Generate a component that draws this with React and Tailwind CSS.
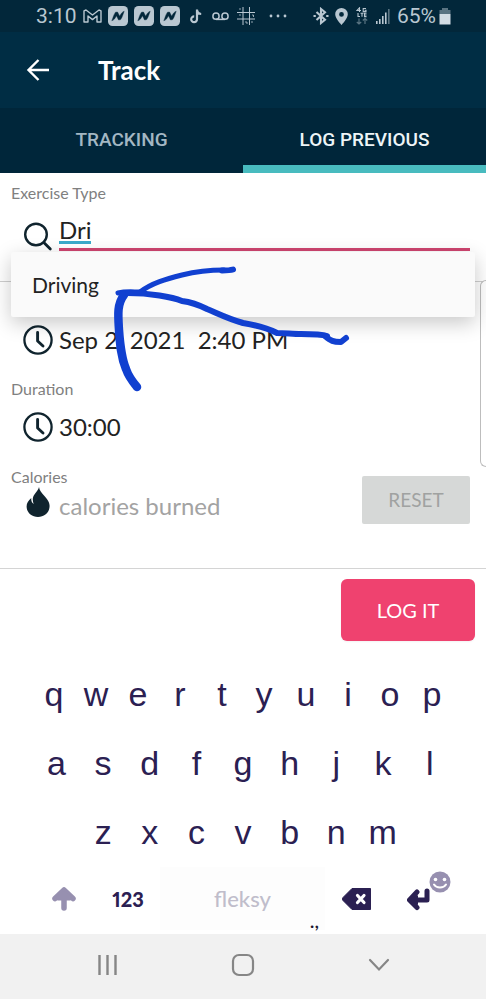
import React from 'react';

const topRow = ['q', 'w', 'e', 'r', 't', 'y', 'u', 'i', 'o', 'p'];
const homeRow = ['a', 's', 'd', 'f', 'g', 'h', 'j', 'k', 'l'];
const bottomRow = ['z', 'x', 'c', 'v', 'b', 'n', 'm'];

const NewsIcon = () => (
  <svg width="20" height="20" viewBox="0 0 20 20">
    <rect width="20" height="20" rx="4.500" fill="#b9c7d1" />
    <path d="M3.800 14.800C5 12 5.500 9 7.500 6.200L9.500 6l2.200 4.200C12.800 8 13.500 6.500 16.200 5.200 15 8 14.500 11 12.600 13.600l-2 .4-2.200-4.200C7.300 12 6.500 13.800 3.800 14.800Z" fill="#02273a" stroke="#02273a" strokeWidth=".4" strokeLinejoin="round" />
  </svg>
);

const ClockIcon = () => (
  <svg width="30" height="30" viewBox="0 0 30 30" fill="none" stroke="#10242e" strokeLinecap="round" strokeLinejoin="round">
    <circle cx="15" cy="15" r="13.6" strokeWidth="2.3" />
    <path d="M14.6 7.5V16l5.4 5" strokeWidth="2.9" />
  </svg>
);

const SearchIcon = () => (
  <svg width="30" height="30" viewBox="0 0 30 30" fill="none" stroke="#10242e" strokeLinecap="round">
    <circle cx="13" cy="13.500" r="10.8" strokeWidth="2.4" />
    <path d="M20.8 21.500 27.3 28" strokeWidth="2.8" />
  </svg>
);

const FlameIcon = () => (
  <svg width="30" height="30" viewBox="0 0 30 30">
    <path
      d="M16 0c-.9 3.800-4.800 6.500-6 10.500-.5 1.800-.2 4.200.7 6.500C8.700 16 8 13.500 8.300 11 5.300 13.500 3.600 16 3.600 19.500 3.600 25.500 8.700 30 15 30s11.600-4.500 11.600-11c0-4.500-2.600-7.200-5.600-10.600C18.600 5.600 16.500 3.500 16 0Z"
      fill="#10242e"
    />
  </svg>
);

const StatusBar = () => (
  <div className="flex h-8 items-center bg-[#02273a] pl-9 pr-[35px] text-[#b9c7d1]">
    <span className="w-[38px] font-['Roboto'] text-[21px] leading-8">3:10</span>
    <svg className="ml-[9px]" width="19" height="14" viewBox="0 0 19 14" fill="none" stroke="currentColor" strokeWidth="1.400" strokeLinejoin="round">
      <path d="M1 13V1.800L3 1l6.500 5L16 1l2 .8V13h-4V7l-4.500 3.600L5 7v6Z" />
    </svg>
    <div className="ml-[6px] flex gap-[6px]">
      <NewsIcon />
      <NewsIcon />
      <NewsIcon />
    </div>
    <svg className="ml-[10px]" width="12" height="15" viewBox="0 0 12 15" fill="none" stroke="currentColor" strokeWidth="2.200">
      <path d="M7 .5v9.800A2.900 2.900 0 1 1 4.200 7.400M7 1c.3 2.500 1.800 3.900 4.200 4" />
    </svg>
    <svg className="ml-[10px]" width="17" height="9" viewBox="0 0 17 9" fill="none" stroke="currentColor" strokeWidth="1.500">
      <circle cx="4" cy="4.200" r="3.100" />
      <circle cx="13" cy="4.200" r="3.100" />
      <path d="M4 7.400h9" />
    </svg>
    <svg className="ml-[8px]" width="18" height="18" viewBox="0 0 18 18" fill="none" stroke="currentColor" strokeWidth="1">
      <path d="M6 0v18M12.500 0v18M0 5.500h18M0 12h18" />
      <path d="M2 2h2M8 15h2v2M15 8h1.500v2M2 8h2M14 15h2" strokeWidth=".8" />
    </svg>
    <svg className="ml-[14px]" width="18" height="4" viewBox="0 0 18 4" fill="currentColor">
      <circle cx="2" cy="2" r="1.400" />
      <circle cx="9" cy="2" r="1.400" />
      <circle cx="16" cy="2" r="1.400" />
    </svg>

    <svg className="ml-auto" width="16" height="18" viewBox="0 0 16 18" fill="none" stroke="currentColor" strokeWidth="2.100">
      <path d="M3.500 5 12 12.700 8 16V2l4 3.300L3.500 13" />
      <path d="M.5 9h2.300M13.200 9h2.300" />
    </svg>
    <svg className="ml-[6px]" width="13" height="17" viewBox="0 0 13 17" fill="currentColor" fillRule="evenodd">
      <path d="M6.500 0A6.300 6.300 0 0 0 .2 6.300C.2 10.500 6.500 17 6.500 17s6.300-6.500 6.300-10.700A6.300 6.300 0 0 0 6.500 0Zm0 4a2.400 2.400 0 1 1 0 4.800 2.400 2.400 0 0 1 0-4.800Z" />
    </svg>
    <svg className="ml-[8px]" width="12" height="18" viewBox="0 0 12 18" fill="none" stroke="currentColor">
      <path d="M3.500 5V.8L1 3.500h4M10 1.500H7.200V4.600H10V3.200H8.600M2 6v3.500h2M4.500 6.200h3M6 6.200v3.500M10.500 6.200H8.500v3.400h2M8.500 8h2" strokeWidth="1.100" />
      <path d="M3 11.500V17M.8 15 3 17l2.200-2M9 17v-5.500M6.800 13.500 9 11.500l2.200 2" stroke="#5a7482" strokeWidth="1.200" />
    </svg>
    <svg className="ml-[8px]" width="14" height="16" viewBox="0 0 14 16" fill="currentColor">
      <path d="M0 13h1.600v3H0ZM3 11h1.600v5H3ZM6 8h1.600v8H6ZM9 4.500h1.600V16H9Z" />
      <path d="M12 1h1.600v15H12Z" fill="#5a7482" />
    </svg>
    <span className="ml-[7px] w-[38px] font-['Roboto'] text-[21px] leading-8">65%</span>
    <svg className="ml-[4px]" width="12" height="17" viewBox="0 0 12 17">
      <path d="M3 0h6v2h2.500v4H.5V2H3Z" fill="#5a7482" />
      <path d="M.5 6h11v10.500H.5Z" fill="#d3dde4" />
    </svg>
  </div>
);

const Header = () => (
  <header className="flex h-[76px] items-center bg-[#002d44] pl-[26px] text-white">
    <button type="button" aria-label="Back">
      <svg width="24" height="24" viewBox="0 0 24 24" fill="none" stroke="currentColor" strokeWidth="2.400">
        <path d="M12.500 2 2.500 12l10 10M2.500 12H23" />
      </svg>
    </button>
    <h1 className="ml-12 font-['Lato'] text-[26px] font-bold leading-8">Track</h1>
  </header>
);

const Tabs = () => (
  <nav className="grid h-[65px] grid-cols-2 bg-[#00263a] font-['Roboto'] text-[19px] font-medium">
    <button type="button" className="border-b-8 border-transparent pt-2 text-[#a3b7c3]">TRACKING</button>
    <button type="button" className="border-b-8 border-[#48bbbf] pt-2 text-[#eef5f7]">LOG PREVIOUS</button>
  </nav>
);

const ExerciseField = () => (
  <section className="relative h-[109px] border-b border-[#cfcfcf] pl-[11px] pr-4 pt-[10px]">
    <label htmlFor="exercise" className="block text-[16px] leading-5 text-[#808080]">Exercise Type</label>
    <div className="ml-3 flex items-end gap-[6px]">
      <SearchIcon />
      <div className="relative min-w-0 flex-1">
        <input
          id="exercise"
          type="text"
          defaultValue="Dri"
          spellCheck={false}
          className="block h-12 w-full border-b-[3px] border-[#cf4570] pt-2 text-[24px] text-[#222] outline-none"
        />
        {/* composing underline */}
        <span className="absolute bottom-[7px] left-0 h-[3px] w-8 bg-[#3aabcb]" />
      </div>
    </div>
    {/* suggestions */}
    <ul className="absolute left-[11px] right-[11px] top-[79px] z-10 rounded-xs bg-[#fafafa] shadow-[0_6px_20px_rgba(0,0,0,0.22)]">
      <li>
        <button type="button" className="h-[65px] w-full pl-[21px] text-left text-[21px] text-[#222]">Driving</button>
      </li>
    </ul>
  </section>
);

const Details = () => (
  <section className="border-b border-[#d4d4d4] pl-[11px] pr-4 pb-11 pt-[42px]">
    <div className="ml-3 flex h-8 items-center gap-[6px]">
      <ClockIcon />
      <input aria-label="Start time" type="text" defaultValue="Sep 2, 2021  2:40 PM" className="h-8 min-w-0 flex-1 text-[24px] text-[#222] outline-none" />
    </div>
    <label htmlFor="duration" className="mt-[23px] block text-[16px] leading-5 text-[#808080]">Duration</label>
    <div className="ml-3 mt-3 flex h-8 items-center gap-[6px]">
      <ClockIcon />
      <input id="duration" type="text" defaultValue="30:00" className="h-8 min-w-0 flex-1 text-[24px] text-[#222] outline-none" />
    </div>
    <div className="mt-6 flex items-end justify-between">
      <div className="min-w-0 flex-1">
        <label htmlFor="calories" className="block text-[16px] leading-5 text-[#808080]">Calories</label>
        <div className="ml-3 flex items-start gap-[6px]">
          <FlameIcon />
          <input id="calories" type="text" placeholder="calories burned" className="h-[37px] min-w-0 flex-1 text-[24px] outline-none placeholder:text-[#a3a3a3]" />
        </div>
      </div>
      <button type="button" disabled className="h-12 w-[108px] rounded-xs bg-[#d6d8d7] text-[19px] text-[#a0a2a1]">RESET</button>
    </div>
  </section>
);

const KeyRow = ({ keys, className }) => (
  <div className={`flex h-[69px] ${className}`}>
    {keys.map((k) => (
      <button key={k} type="button" className="flex-1">{k}</button>
    ))}
  </div>
);

const Keyboard = () => (
  <div className="text-[#2b2052]">
    <div className="font-['Liberation_Sans'] text-[34px] leading-[69px]">
      <KeyRow keys={topRow} className="px-[33px]" />
      <KeyRow keys={homeRow} className="px-[33px]" />
      <KeyRow keys={bottomRow} className="px-20" />
    </div>
    <div className="flex h-[67px] px-8 pb-1">
      <button type="button" aria-label="Shift" className="flex w-16 items-center justify-center">
        <svg width="26" height="26" viewBox="0 0 26 26" fill="none" stroke="#9790b0" strokeWidth="5.500" strokeLinecap="round" strokeLinejoin="round">
          <path d="M13 5v17M4 12.500 13 4l9 8.500" />
          <path d="m7 12.500 6-5.500 6 5.500Z" fill="#9790b0" strokeWidth="4" />
        </svg>
      </button>
      <button type="button" className="w-16 font-['Lato'] text-[20px] font-black proportional-nums">123</button>
      <button type="button" className="relative min-w-0 flex-1 bg-[#fdfdfd] font-['Lato'] text-[22px] font-medium text-[#c0bdcb]">
        fleksy
        <span className="absolute bottom-0 right-[6px] text-[20px] leading-5 text-[#1c1830]">.,</span>
      </button>
      <button type="button" aria-label="Delete" className="flex w-[63px] items-center justify-center">
        <svg width="30" height="24" viewBox="0 0 30 24">
          <path d="M10 1.500h18.500v21H10L1.500 14a2.500 2.500 0 0 1 0-4Z" fill="#2b2052" stroke="#2b2052" strokeLinejoin="round" />
          <path d="m15.500 8.500 6.500 7m0-7-6.500 7" stroke="#fff" strokeWidth="3.200" strokeLinecap="round" />
        </svg>
      </button>
      <button type="button" aria-label="Enter" className="relative flex w-[66px] items-center pl-[19px]">
        <svg width="24" height="24" viewBox="0 0 24 24" fill="none" stroke="#2b2052" strokeWidth="5" strokeLinecap="round" strokeLinejoin="round">
          <path d="M20 4v9H5M10 5 2.500 13l7.500 7.500" />
          <path d="M5 13l5-4v8Z" fill="#2b2052" strokeWidth="2" />
        </svg>
        <svg className="absolute right-[3px] top-1" width="22" height="22" viewBox="0 0 22 22">
          <circle cx="11" cy="11" r="10.500" fill="#9790b0" />
          <circle cx="6.500" cy="8.500" r="1.800" fill="#fff" />
          <circle cx="15.500" cy="8.500" r="1.800" fill="#fff" />
          <path d="M5 13.500c2.500 4 9.500 4 12 0" fill="none" stroke="#fff" strokeWidth="2" strokeLinecap="round" />
        </svg>
      </button>
    </div>
  </div>
);

const SystemNav = () => (
  <div className="grid h-[65px] grid-cols-[1fr_57px_1fr] items-center bg-[#f1f1f1] pb-1 text-[#868686]">
    <button type="button" aria-label="Recents" className="flex justify-center">
      <svg width="22" height="22" viewBox="0 0 22 22" stroke="currentColor" strokeWidth="2.400">
        <path d="M3.500 1v20M11.500 1v20M19.500 1v20" />
      </svg>
    </button>
    <button type="button" aria-label="Home" className="flex justify-center">
      <svg width="24" height="24" viewBox="0 0 24 24" fill="none" stroke="currentColor" strokeWidth="2.200">
        <rect x="2" y="2" width="20" height="20" rx="6" />
      </svg>
    </button>
    <button type="button" aria-label="Hide keyboard" className="flex justify-center">
      <svg width="22" height="14" viewBox="0 0 22 14" fill="none" stroke="currentColor" strokeWidth="2.200" strokeLinecap="round">
        <path d="m2 2 9 9.500L20 2" />
      </svg>
    </button>
  </div>
);

// hand drawn arrow pointing at the suggestion
const Marker = () => (
  <svg className="pointer-events-none absolute left-[110px] top-[85px] z-20" width="245" height="140" viewBox="110 258 245 140" fill="none" stroke="#1140d0" strokeLinecap="round" strokeLinejoin="round">
    <path d="M118 293c8-2 15-1 22-1" strokeWidth="5" />
    <path d="M140 292C152 283 166 279 182 275c12-3 24-5 42-5" strokeWidth="5" />
    <path d="M222 270.500c3 0 8 0 11-1" strokeWidth="6" />
    <path d="M124 295c-7 9-6 20-5 35 1 14 2 27 7 39 2 6 6 12 11 18" strokeWidth="8.500" />
    <path d="M128 293c22 0 44 4 54 8 8 1 15 3 25 8 10 4 19 9 36 14 12 2 22 4 34 10 8 0 16 1 24 1 10 0 20 0 26 2" strokeWidth="6" />
    <path d="M325 336c6 5 8 6 16 6l5-4" strokeWidth="6" />
  </svg>
);

export default function App() {
  return (
    <div className="bg-white">
      <StatusBar />
      <Header />
      <Tabs />
      <main className="relative font-['Lato',sans-serif]">
        <ExerciseField />
        <Details />
        <div className="flex justify-end pb-[19px] pr-[11px] pt-[10px]">
          <button type="button" className="h-[62px] w-[134px] rounded-md bg-[#ef426f] text-[20px] text-white shadow-xs">LOG IT</button>
        </div>
        {/* edge panel handle */}
        <div className="absolute right-0 top-[107px] h-[187px] w-[6px] rounded-l-lg border-y border-l border-[#bdbdbd] bg-white" />
        <Marker />
      </main>
      <Keyboard />
      <SystemNav />
    </div>
  );
}
